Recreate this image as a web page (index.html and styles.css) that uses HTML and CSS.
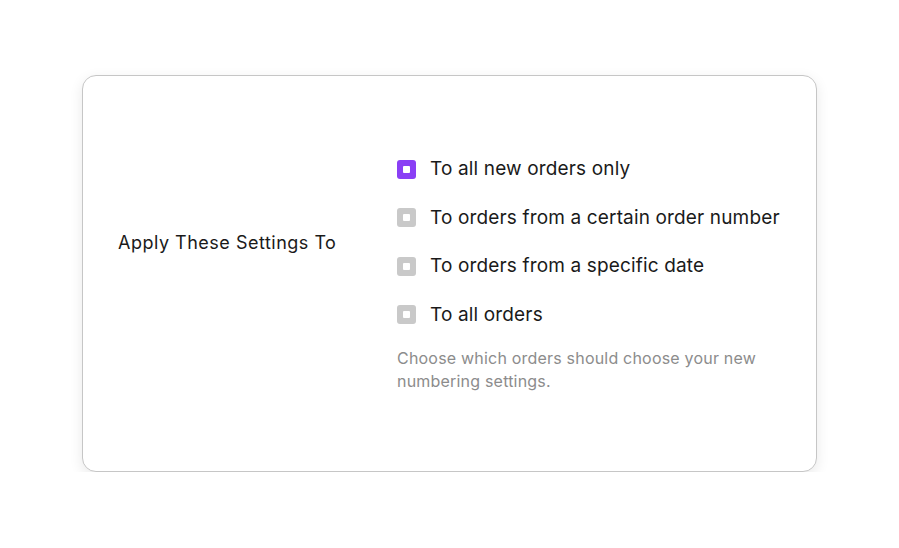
FILE: index.html
```html
<!DOCTYPE html>
<html lang="en">
<head>
  <meta charset="UTF-8" />
  <meta name="viewport" content="width=device-width, initial-scale=1" />
  <title>Order Numbering</title>
  <link rel="stylesheet" href="styles.css">
</head>
<body>

  <div class="card">
    <div class="setting-label">Apply These Settings To</div>
    <div class="setting-body">
      <ul class="options">
        <li class="option checked"><span class="box"></span>To all new orders only</li>
        <li class="option"><span class="box"></span>To orders from a certain order number</li>
        <li class="option"><span class="box"></span>To orders from a specific date</li>
        <li class="option"><span class="box"></span>To all orders</li>
      </ul>
      <p class="help">Choose which orders should choose your new numbering settings.</p>
    </div>
  </div>

</body>
</html>
```

FILE: styles.css
```css
/* General Styling */
body {
  margin: 0;
  background-color: #fff;
  font-family: "Inter", "Noto Sans", sans-serif;
  color: #1a1a1a;
}
.card {
  display: flex;
  width: 735px;
  height: 397px;
  box-sizing: border-box;
  margin: 75px 0 0 82px;
  padding: 81px 36px 0 35px;
  border: 1px solid #c6c6c6;
  border-radius: 14px;
  background-color: #fff;
  box-shadow: 0 4px 14px rgba(0, 0, 0, 0.09);
}
.setting-label {
  width: 279px;
  flex-shrink: 0;
  margin-top: 74px;
  font-size: 18px;
  line-height: 24px;
  letter-spacing: 0.5px;
}
.options {
  list-style: none;
  margin: 0;
  padding: 0;
  display: flex;
  flex-direction: column;
  gap: 24.5px;
}
.option {
  display: flex;
  align-items: center;
  font-size: 19px;
  line-height: 24px;
  letter-spacing: 0.15px;
}
.box {
  width: 19px;
  height: 19px;
  margin-right: 14px;
  border-radius: 3px;
  background-color: #c9c9c9;
  display: flex;
  align-items: center;
  justify-content: center;
  flex-shrink: 0;
}
.box::after {
  content: "";
  width: 7px;
  height: 7px;
  background-color: #fff;
  border-radius: 1px;
}
.checked .box {
  background-color: #8a3ff5;
}
.help {
  margin: 20px 0 0 0;
  width: 385px;
  font-size: 16px;
  line-height: 23px;
  letter-spacing: 0.2px;
  color: #8c8c8c;
}
```
